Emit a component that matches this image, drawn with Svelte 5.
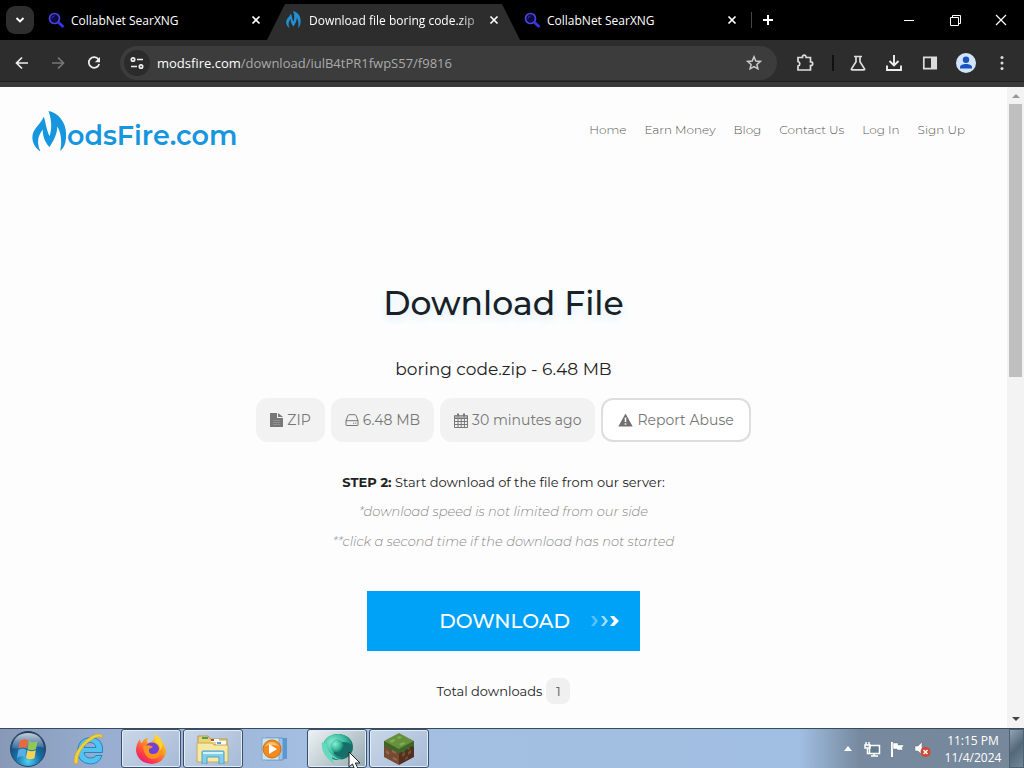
<script>
  const tabs = [
    { title: 'CollabNet SearXNG', icon: 'search', active: false },
    { title: 'Download file boring code.zip', icon: 'flame', active: true },
    { title: 'CollabNet SearXNG', icon: 'search', active: false }
  ];
  const links = ['Home', 'Earn Money', 'Blog', 'Contact Us', 'Log In', 'Sign Up'];
</script>

{#snippet flame(size)}
  <svg class="flame" width={size} height={size * 42 / 36} viewBox="0 0 36 42" aria-hidden="true">
    <path fill="currentColor" d="M9 42C2 37-1 30 1 23C3 17 9 13 12 6C14 10 14 17 18 26C20 20 21 11 17 0C28 2 36 13 35 26C35 33 33 38 29 41C31 32 30 22 26 16C26 24 22 31 18 37C14 33 11 27 11 19C5 27 5 34 9 42Z" />
  </svg>
{/snippet}

{#snippet cross()}
  <svg width="10" height="10" viewBox="0 0 10 10" aria-hidden="true"><path d="M1.500 1.500l7 7m0-7l-7 7" stroke="currentColor" stroke-width="1.700" /></svg>
{/snippet}

<div class="screen">
  <div class="strip">
    <button class="tabsearch" aria-label="Search tabs">
      <svg width="10" height="8" viewBox="0 0 10 8"><path d="M1.500 2l3.500 3.500L8.500 2" fill="none" stroke="#fff" stroke-width="1.900" /></svg>
    </button>
    {#each tabs as tab}
      <div class="tab" class:active={tab.active}>
        <span class="favicon">
          {#if tab.icon === 'search'}
            <svg width="17" height="17" viewBox="0 0 17 17" aria-hidden="true"><circle cx="6.500" cy="6.500" r="5" fill="#0c0b46" stroke="#4845d8" stroke-width="1.700" /><path d="M4 6.500a2.500 2.500 0 0 1 2.500-2.500" fill="none" stroke="#3431b5" /><path d="M10.500 10.500l5 4.500" stroke="#3834ec" stroke-width="2.800" /></svg>
          {:else}
            {@render flame(15)}
          {/if}
        </span>
        <span class="title">{tab.title}</span>
        <button class="close" aria-label="Close tab">{@render cross()}</button>
      </div>
    {/each}
    <span class="divider"></span>
    <button class="newtab" aria-label="New tab"><svg width="12" height="12" viewBox="0 0 12 12"><path d="M6 1v10M1 6h10" stroke="#fff" stroke-width="2" /></svg></button>
    <div class="window">
      <button aria-label="Minimize"><svg width="11" height="11" viewBox="0 0 11 11"><path d="M0 5.500h10" stroke="#fff" /></svg></button>
      <button aria-label="Restore"><svg width="11" height="11" viewBox="0 0 11 11"><path d="M.5 2.500h8v8h-8zM2.500 2.500v-2h8v8h-2" fill="none" stroke="#fff" /></svg></button>
      <button aria-label="Close window"><svg width="12" height="12" viewBox="0 0 12 12"><path d="M1 1l10 10M11 1L1 11" stroke="#fff" stroke-width="1.200" /></svg></button>
    </div>
  </div>

  <div class="toolbar">
    <button class="nav" aria-label="Back"><svg width="16" height="16" viewBox="0 0 16 16"><path d="M14 8H2.500M8 2.500L2.500 8 8 13.500" fill="none" stroke="#eee" stroke-width="1.700" /></svg></button>
    <button class="nav" aria-label="Forward"><svg width="16" height="16" viewBox="0 0 16 16"><path d="M2 8h11.500M8 2.500L13.500 8 8 13.500" fill="none" stroke="#777" stroke-width="1.700" /></svg></button>
    <button class="nav" aria-label="Reload"><svg width="16" height="16" viewBox="0 0 16 16"><path d="M12.500 4.500A5.300 5.300 0 1 0 13.200 9" fill="none" stroke="#eee" stroke-width="1.700" /><path d="M14 2v5.200H8.800z" fill="#eee" /></svg></button>
    <div class="omnibox">
      <button class="site" aria-label="Site information"><svg width="16" height="14" viewBox="0 0 16 14"><g fill="none" stroke="#eee" stroke-width="1.700"><circle cx="4" cy="3.500" r="1.700" /><path d="M8 3.500h6M2 10.500h6" /><circle cx="12" cy="10.500" r="1.700" /></g></svg></button>
      <div class="url"><span>modsfire.com</span>/download/iulB4tPR1fwpS57/f9816</div>
      <button class="star" aria-label="Bookmark"><svg width="16" height="16" viewBox="0 0 16 16"><path d="M8 1.800l1.800 4.200 4.500.4-3.400 3 1 4.400L8 11.500l-3.900 2.300 1-4.400-3.400-3 4.500-.4z" fill="none" stroke="#ccc" stroke-width="1.500" /></svg></button>
    </div>
    <button class="ext" aria-label="Extensions"><svg width="20" height="20" viewBox="0 0 20 20"><path d="M3 4.500h4.500V4a1.800 1.800 0 0 1 3.600 0v.5h4.400v4.400h.4a1.800 1.800 0 0 1 0 3.600h-.4v4.500H3v-4a2.300 2.300 0 0 0 0-4.500z" fill="none" stroke="#ddd" stroke-width="1.700" /></svg></button>
    <span class="bar"></span>
    <button class="tool" aria-label="Experiments"><svg width="18" height="18" viewBox="0 0 18 18"><path d="M5 2.500h8M7 2.500v5.200L2.500 14.800q-.4 1 .6 1h11.800q1 0 .6-1L11 7.700V2.500" fill="none" stroke="#ddd" stroke-width="1.700" /></svg></button>
    <button class="tool" aria-label="Downloads"><svg width="18" height="18" viewBox="0 0 18 18"><path d="M9 1v10M4.500 7L9 11.500 13.500 7M2 11.500V16h14v-4.500" fill="none" stroke="#eee" stroke-width="1.900" /></svg></button>
    <button class="tool" aria-label="Side panel"><svg width="16" height="16" viewBox="0 0 16 16"><path d="M1.800 2.300h12.400v11.400H1.800z" fill="none" stroke="#ddd" stroke-width="1.700" /><path d="M9 2h5v12H9z" fill="#ddd" /></svg></button>
    <button class="tool" aria-label="Profile"><svg width="20" height="20" viewBox="0 0 20 20"><circle cx="10" cy="10" r="10" fill="#d3e3fd" /><circle cx="10" cy="6.800" r="3.200" fill="#1755bd" /><path d="M4 15.500v-1.300c0-4.300 12-4.300 12 0v1.300z" fill="#1755bd" /></svg></button>
    <button class="tool" aria-label="Menu"><svg width="4" height="16" viewBox="0 0 4 16" fill="#ddd"><circle cx="2" cy="2.500" r="1.500" /><circle cx="2" cy="8" r="1.500" /><circle cx="2" cy="13.500" r="1.500" /></svg></button>
  </div>

  <div class="viewport">
    <div class="page">
      <header>
        <a class="logo" href="#home">{@render flame(35)}<span>odsFire.com</span></a>
        <nav>
          {#each links as link}<a href="#top">{link}</a>{/each}
        </nav>
      </header>
      <main>
        <h1>Download File</h1>
        <h2>boring code.zip - 6.48 MB</h2>
        <div class="chips">
          <span class="chip"><svg width="13" height="14" viewBox="0 0 13 14"><path d="M0 0h7v5h6v9H0z" fill="#777" /><path d="M8 0l5 4H8z" fill="#777" /><path d="M3 7.500h7M3 9.500h7M3 11.500h7" stroke="#999" stroke-width=".7" /></svg>ZIP</span>
          <span class="chip"><svg width="14" height="12" viewBox="0 0 14 12"><path d="M1 6.500l2-5q.3-.8 1-.8h6q.7 0 1 .8l2 5V11q0 .5-.6.500H1.600Q1 11.500 1 11zM1 6.700h12" fill="none" stroke="#777" /><path d="M8 9.200h1.200m1 0h1.200" stroke="#777" /></svg>6.48 MB</span>
          <span class="chip"><svg width="14" height="15" viewBox="0 0 14 15"><path d="M.5 2.500h13v12H.5zM.5 5.500h13M.5 8.500h13M.5 11.500h13M4 5.500v9M7.200 5.500v9M10.400 5.500v9" fill="none" stroke="#777" /><path d="M1 2.500h12v2.500H1z" fill="#aaa" /><path d="M4 .5v3m6-3v3" stroke="#777" stroke-width="2" /></svg>30 minutes ago</span>
          <button class="chip report"><svg width="15" height="14" viewBox="0 0 15 14"><path d="M7.500.5L14.700 13.500H.3z" fill="#707070" /><path d="M7.500 4.500v4.500m0 1.200v1.600" stroke="#fff" stroke-width="1.600" /></svg>Report Abuse</button>
        </div>
        <p class="step"><b>STEP 2:</b> Start download of the file from our server:</p>
        <p class="note">*download speed is not limited from our side</p>
        <p class="note">**click a second time if the download has not started</p>
        <button class="download">DOWNLOAD
          <svg width="30" height="12" viewBox="0 0 30 12"><g fill="#fff"><path opacity=".35" d="M1 1h3l4 5-4 5H1l4-5z" /><path opacity=".65" d="M11 1h3l4 5-4 5h-3l4-5z" /><path d="M20 1h4l5 5-5 5h-4l4-5z" /></g></svg>
        </button>
        <p class="total">Total downloads <span>1</span></p>
      </main>
    </div>
    <div class="scroll" aria-hidden="true">
      <svg width="8" height="4" viewBox="0 0 8 4"><path d="M0 4l4-4 4 4z" fill="#999" /></svg>
      <div class="track"><div class="thumb"></div></div>
      <svg width="8" height="4" viewBox="0 0 8 4"><path d="M0 0l4 4 4-4z" fill="#444" /></svg>
    </div>
  </div>

  <footer class="taskbar">
    <button class="start" aria-label="Start">
      <svg width="38" height="38" viewBox="0 0 38 38">
        <defs>
          <radialGradient id="orb" cx=".5" cy=".85" r=".8"><stop offset="0" stop-color="#4ed1f5" /><stop offset=".45" stop-color="#176da8" /><stop offset="1" stop-color="#173b66" /></radialGradient>
          <linearGradient id="gloss" x2="0" y2="1"><stop stop-color="#fff" stop-opacity=".75" /><stop offset="1" stop-color="#fff" stop-opacity=".12" /></linearGradient>
        </defs>
        <circle cx="19" cy="19" r="17.500" fill="url(#orb)" stroke="#27465f" />
        <path d="M3 18C4 8 10 3 19 3s15 5 16 15c-9-4-21 3-32 0z" fill="url(#gloss)" />
        <path d="M11 11q4-3 8-.5l-1.500 8q-4-2.500-8 0z" fill="#ef6639" /><path d="M20 11q4 2.500 8.500 0L27 19q-4 2.500-8.500 0z" fill="#91c758" /><path d="M9.300 20q4-2.500 8 0L16 27.500q-4-2.500-8 .5z" fill="#58aee2" /><path d="M18.500 20q4 2.500 8.300 0L25.500 28q-4 2.500-8.500 0z" fill="#fbd34e" />
      </svg>
    </button>
    <button class="task" aria-label="Internet Explorer">
      <svg width="32" height="34" viewBox="0 0 32 34">
        <path d="M29.500 20.500H11q1 5.500 6.500 5.500 4 0 5.500-2.500h6q-3 8.500-11.500 8.500-13-1-13-13.500Q5.500 6 17.500 5.500 31 6 29.500 20.500zM11 15.500h12Q22 10.500 17 10.500T11 15.500z" fill="#52c2f1" stroke="#2684c4" />
        <path d="M2 32C-2 25 8 10 19 4c6-3 12-3 10 3 0-3-4-3-9 0C10 13 4 22 5 31z" fill="#f5cf3a" stroke="#d29d1b" stroke-width=".5" />
      </svg>
    </button>
    <button class="task open" aria-label="Firefox">
      <svg width="32" height="32" viewBox="0 0 32 32">
        <defs><linearGradient id="fox" x1=".9" y1="0" x2=".2" y2="1"><stop stop-color="#fff14a" /><stop offset=".4" stop-color="#ff9d22" /><stop offset=".75" stop-color="#ff3f49" /><stop offset="1" stop-color="#e41579" /></linearGradient></defs>
        <path d="M19 1q8 4 8 8 4 3 4 10-2 11-14 12Q3 30 1 18q0-7 4-12 0 4 2 4 2-5 6-5-2 3 0 5 8-1 6-9z" fill="url(#fox)" />
        <circle cx="17" cy="17" r="7.500" fill="#7043d5" /><path d="M8 13q7-2 10 1l-4 2q-1 5 4 5 5 0 6-5 0-5-4-7 9 2 7 10-3 7-10 7-8-1-9-13z" fill="#ff921f" />
        <path d="M20 9q7 4 4 9 4-2 3-8-3-5-7-8 1 4 0 7z" fill="#ffd52f" />
      </svg>
    </button>
    <button class="task open" aria-label="File Explorer">
      <svg width="34" height="30" viewBox="0 0 34 30">
        <path d="M2 2h10l2 3h17v6H2z" fill="#ecd37a" stroke="#b69a4c" /><path d="M6 3h6v2H6z" fill="#4ba34d" /><path d="M15 5h8v3h-8z" fill="#fff" /><path d="M15 5h3v2h-3z" fill="#c84334" /><path d="M20 7h10v4H20z" fill="#fff" /><path d="M21 8h4v2h-4z" fill="#5ca1d4" />
        <path d="M1 9h15l2 2h14v17H1z" fill="#f7e8a3" stroke="#c4ac61" /><path d="M6 30V18q0-1 1-1h20q1 0 1 1v12h-5v-7H11v7z" fill="#83cdec" stroke="#4f9fca" /><path d="M7 18h20v2H7z" fill="#d0f3fc" />
      </svg>
    </button>
    <button class="task" aria-label="Media Player">
      <svg width="28" height="26" viewBox="0 0 28 26"><path d="M8 2h18v21H8z" fill="#5b98d3" /><path d="M5 2h17v22H5z" fill="#9bc6ea" stroke="#6595bd" /><path d="M1 2h17v22H1z" fill="#c8e4f6" stroke="#83a8c4" /><circle cx="11" cy="13" r="9" fill="#f28a20" stroke="#d76d0c" /><path d="M4 10q6-8 14 0-6-2-14 0z" fill="#ffc06b" /><path d="M8 8l8 5-8 5z" fill="#fff" /></svg>
    </button>
    <button class="task open current" aria-label="Browser">
      <svg width="34" height="34" viewBox="0 0 34 34">
        <defs><radialGradient id="teal" cx=".35" cy=".35" r=".7"><stop stop-color="#8cf0d9" /><stop offset=".6" stop-color="#39b99c" /><stop offset="1" stop-color="#12766c" /></radialGradient></defs>
        <ellipse cx="18" cy="15" rx="15" ry="13" fill="#176d68" /><path d="M3 12Q7 1 20 2q11 2 12 11-6-5-13-2-8 3-5 11 6 6 14 1-7 7-17 3Q1 21 3 12z" fill="url(#teal)" /><circle cx="17" cy="14" r="6.500" fill="url(#teal)" /><path d="M2 10q-2 12 13 23-3-5-3-8 6 4 11 3Q9 25 6 12z" fill="#65d9bd" />
      </svg>
      <svg class="cursor" width="13" height="20" viewBox="0 0 13 20"><path d="M1 1v15l3.500-3 2.500 6 3-1.300-2.700-5.700H12z" fill="#fff" stroke="#222" /></svg>
    </button>
    <button class="task open" aria-label="Minecraft">
      <svg width="32" height="32" viewBox="0 0 32 32">
        <path d="M1 8L16 0l15 8-15 8z" fill="#65913d" /><path d="M1 8l15 8v16L1 24z" fill="#754b34" /><path d="M31 8l-15 8v16l15-8z" fill="#51301f" /><path d="M1 8l15 8v4l-3-1-2 1-2-4-3 1-2-4-3 1zM31 8l-15 8v4l3-1 2 1 2-4 3 1 2-4 3 1z" fill="#3e6727" />
        <path d="M6 8l4-2 3 1-4 3zm10-5l3 1-2 2-4-1zm0 8l4-2 3 1-5 3z" fill="#7ead51" /><path d="M3 17l3 2v3l-3-2zm6 0l4 2v2l-4-2zm1 7l4 2v2l-4-2z" fill="#9a6850" /><path d="M19 21l3-2v3l-3 2zm6-2l3-2v3l-3 2zm-3 6l3-2v2l-3 2z" fill="#7c4c33" />
      </svg>
    </button>
    <div class="tray">
      <svg width="8" height="5" viewBox="0 0 8 5"><path d="M0 5l4-5 4 5z" fill="#fff" /></svg>
      <svg width="17" height="16" viewBox="0 0 17 16"><path d="M5.500 4.500h10v8h-10z" fill="#637a8f" stroke="#fff" stroke-width="1.500" /><path d="M10 13v2M7 15h7M2 1v3m3-3v3M1 4h5v3H1zM3.500 7v5.500H5" fill="none" stroke="#fff" stroke-width="1.500" /></svg>
      <svg width="15" height="16" viewBox="0 0 15 16"><path d="M2 1v15" stroke="#fff" stroke-width="2" /><path d="M3 2h5v2h6l-2 3 1 2H7V8H3z" fill="#fff" stroke="#586b7c" stroke-width=".4" /></svg>
      <svg width="17" height="16" viewBox="0 0 17 16"><path d="M1 5h3l4-4v13l-4-4H1z" fill="#fff" stroke="#667" stroke-width=".5" /><circle cx="11.500" cy="11" r="5" fill="#d54432" /><path d="M9.500 9l4 4m0-4l-4 4" stroke="#fff" stroke-width="1.500" /></svg>
      <div class="clock"><span>11:15 PM</span><span>11/4/2024</span></div>
    </div>
    <button class="desktop" aria-label="Show desktop"></button>
  </footer>
</div>

<style>
  :global(body) { margin: 0; background: #fff; }
  :global(*) { box-sizing: border-box; }
  button { border: 0; background: none; padding: 0; margin: 0; color: inherit; font: inherit; display: flex; align-items: center; justify-content: center; flex: none; }
  svg { flex: none; display: block; }
  a { text-decoration: none; color: inherit; }
  .screen { min-height: 100vh; display: flex; flex-direction: column; font-family: "Segoe UI", "Open Sans", sans-serif; }
  .strip { height: 40px; background: #000; color: #fff; display: flex; align-items: center; padding-left: 6px; }
  .tabsearch { width: 28px; height: 28px; border-radius: 9px; background: #2e2e2e; margin-right: 4px; }
  .tab { position: relative; flex: 0 1 238px; min-width: 0; height: 40px; padding: 0 15px 0 10px; display: flex; align-items: center; gap: 7px; font-size: 12px; font-weight: 500; }
  .tab.active { font-weight: 500; }
  .tab.active::before { content: ""; position: absolute; inset: 4px -6px 0 -9px; background: #2d2d2d; clip-path: polygon(18px 0, calc(100% - 18px) 0, 100% 100%, 0 100%); }
  .tab > * { position: relative; }
  .favicon { width: 16px; flex: none; color: #218fd3; }
  .title { flex: 1; overflow: hidden; white-space: nowrap; }
  .active .title { mask-image: linear-gradient(90deg, #000 86%, #0005); }
  .close { width: 10px; }
  .divider { width: 1px; height: 16px; background: #444; margin: 0 10px 0 -1px; }
  .newtab { width: 12px; }
  .window { display: flex; align-self: stretch; margin-left: auto; }
  .window button { width: 46px; }
  .toolbar { height: 47px; background: #2d2d2d; border-bottom: 5px solid #393939; box-shadow: inset 0 -1px #202020; display: flex; align-items: center; gap: 20px; padding: 4px 20px 0 14px; }
  .nav { width: 16px; }
  .omnibox { flex: 1; min-width: 0; height: 34px; border-radius: 17px; background: #3c3c3c; display: flex; align-items: center; padding: 0 15px 0 4px; margin: 0 -2px; }
  .site { width: 26px; height: 26px; border-radius: 13px; background: #2b2b2b; }
  .url { flex: 1; margin-left: 7px; color: #aaa; font-size: 13px; white-space: nowrap; overflow: hidden; }
  .url span { color: #fff; }
  .ext { width: 20px; margin-right: 1px; }
  .bar { width: 2px; height: 16px; background: #111; margin: 0 -4px; }
  .tool { width: 16px; }
  .tool:last-child { width: 20px; margin-left: -2px; margin-right: -8px; }
  .viewport { flex: 1; display: flex; background: #fdfdfd; }
  .page { flex: 1; min-width: 0; font-family: Montserrat, Inter, sans-serif; color: #222; }
  header { display: flex; align-items: flex-start; justify-content: space-between; padding: 19px 42px 0 32px; }
  .logo { display: flex; align-items: center; color: #1596df; font-size: 27px; font-weight: 600; line-height: 40px; }
  .logo span { padding-top: 10px; }
  nav { display: flex; gap: 18px; padding-top: 14px; font-size: 12px; line-height: 20px; color: #555; font-weight: 300; }
  main { display: flex; flex-direction: column; align-items: center; padding: 122px 16px 16px; }
  h1 { margin: 0; font-size: 33px; line-height: 50px; font-weight: 500; color: #182126; text-shadow: 0 4px 10px #d9eef9; }
  h2 { margin: 29px 0 17px; font-size: 17px; line-height: 24px; font-weight: 400; }
  .chips { display: flex; gap: 6px; }
  .chip { display: flex; align-items: center; gap: 4px; height: 44px; padding: 0 14px; border-radius: 12px; background: #f2f2f2; color: #777; font-size: 14px; font-weight: 400; white-space: nowrap; }
  .report { padding: 0 15px; background: #fff; border: 2px solid #ddd; }
  p { margin: 0; }
  .step { margin-top: 30px; font-size: 13px; line-height: 20px; }
  .step b { font-weight: 700; }
  .note { margin-top: 10px; font-size: 13px; line-height: 20px; font-style: italic; font-weight: 300; color: #888; }
  .step + .note { margin-top: 9px; }
  .download { margin-top: 40px; height: 60px; width: 273px; background: #00a2f8; color: #fff; font-size: 20px; font-weight: 500; justify-content: flex-end; gap: 20px; padding-right: 20px; }
  .total { margin-top: 27px; font-size: 13px; line-height: 26px; display: flex; gap: 4px; }
  .total span { width: 24px; text-align: center; background: #f0f0f0; border-radius: 8px; color: #555; }
  .scroll { width: 17px; background: #f3f3f3; display: flex; flex-direction: column; align-items: center; padding: 7px 0; }
  .track { flex: 1; width: 13px; padding: 6px 0; }
  .thumb { height: 45%; background: #bfbfbf; }
  .taskbar { height: 40px; display: flex; align-items: center; gap: 2px; border-top: 1px solid #364b60; background: linear-gradient(90deg, #8799b6, #98add0 10%, #a3bee0 30%, #a1bfe2 78%, #76899e 84%, #76889a); color: #fff; }
  .start { width: 55px; height: 39px; }
  .task { position: relative; width: 60px; height: 39px; border-radius: 3px; }
  .start + .task { margin-left: 2px; }
  .open { border: 1px solid #3b4f6b; box-shadow: inset 0 0 0 1px #e3edf8; background: linear-gradient(135deg, #cad7e8, #a6bad6); }
  .current { background: linear-gradient(135deg, #eef3f5, #94aab0); }
  .cursor { position: absolute; left: 40px; top: 21px; }
  .tray { margin-left: auto; display: flex; align-items: center; gap: 9px; }
  .tray svg:first-child { margin-right: 3px; }
  .clock { width: 60px; display: flex; flex-direction: column; align-items: center; margin: 0 4px 0 3px; font-size: 12px; line-height: 17px; }
  .desktop { width: 15px; height: 39px; border: 1px solid #4e6173; background: linear-gradient(135deg, #91a3b2, #53697a 50%, #728795); }
</style>
